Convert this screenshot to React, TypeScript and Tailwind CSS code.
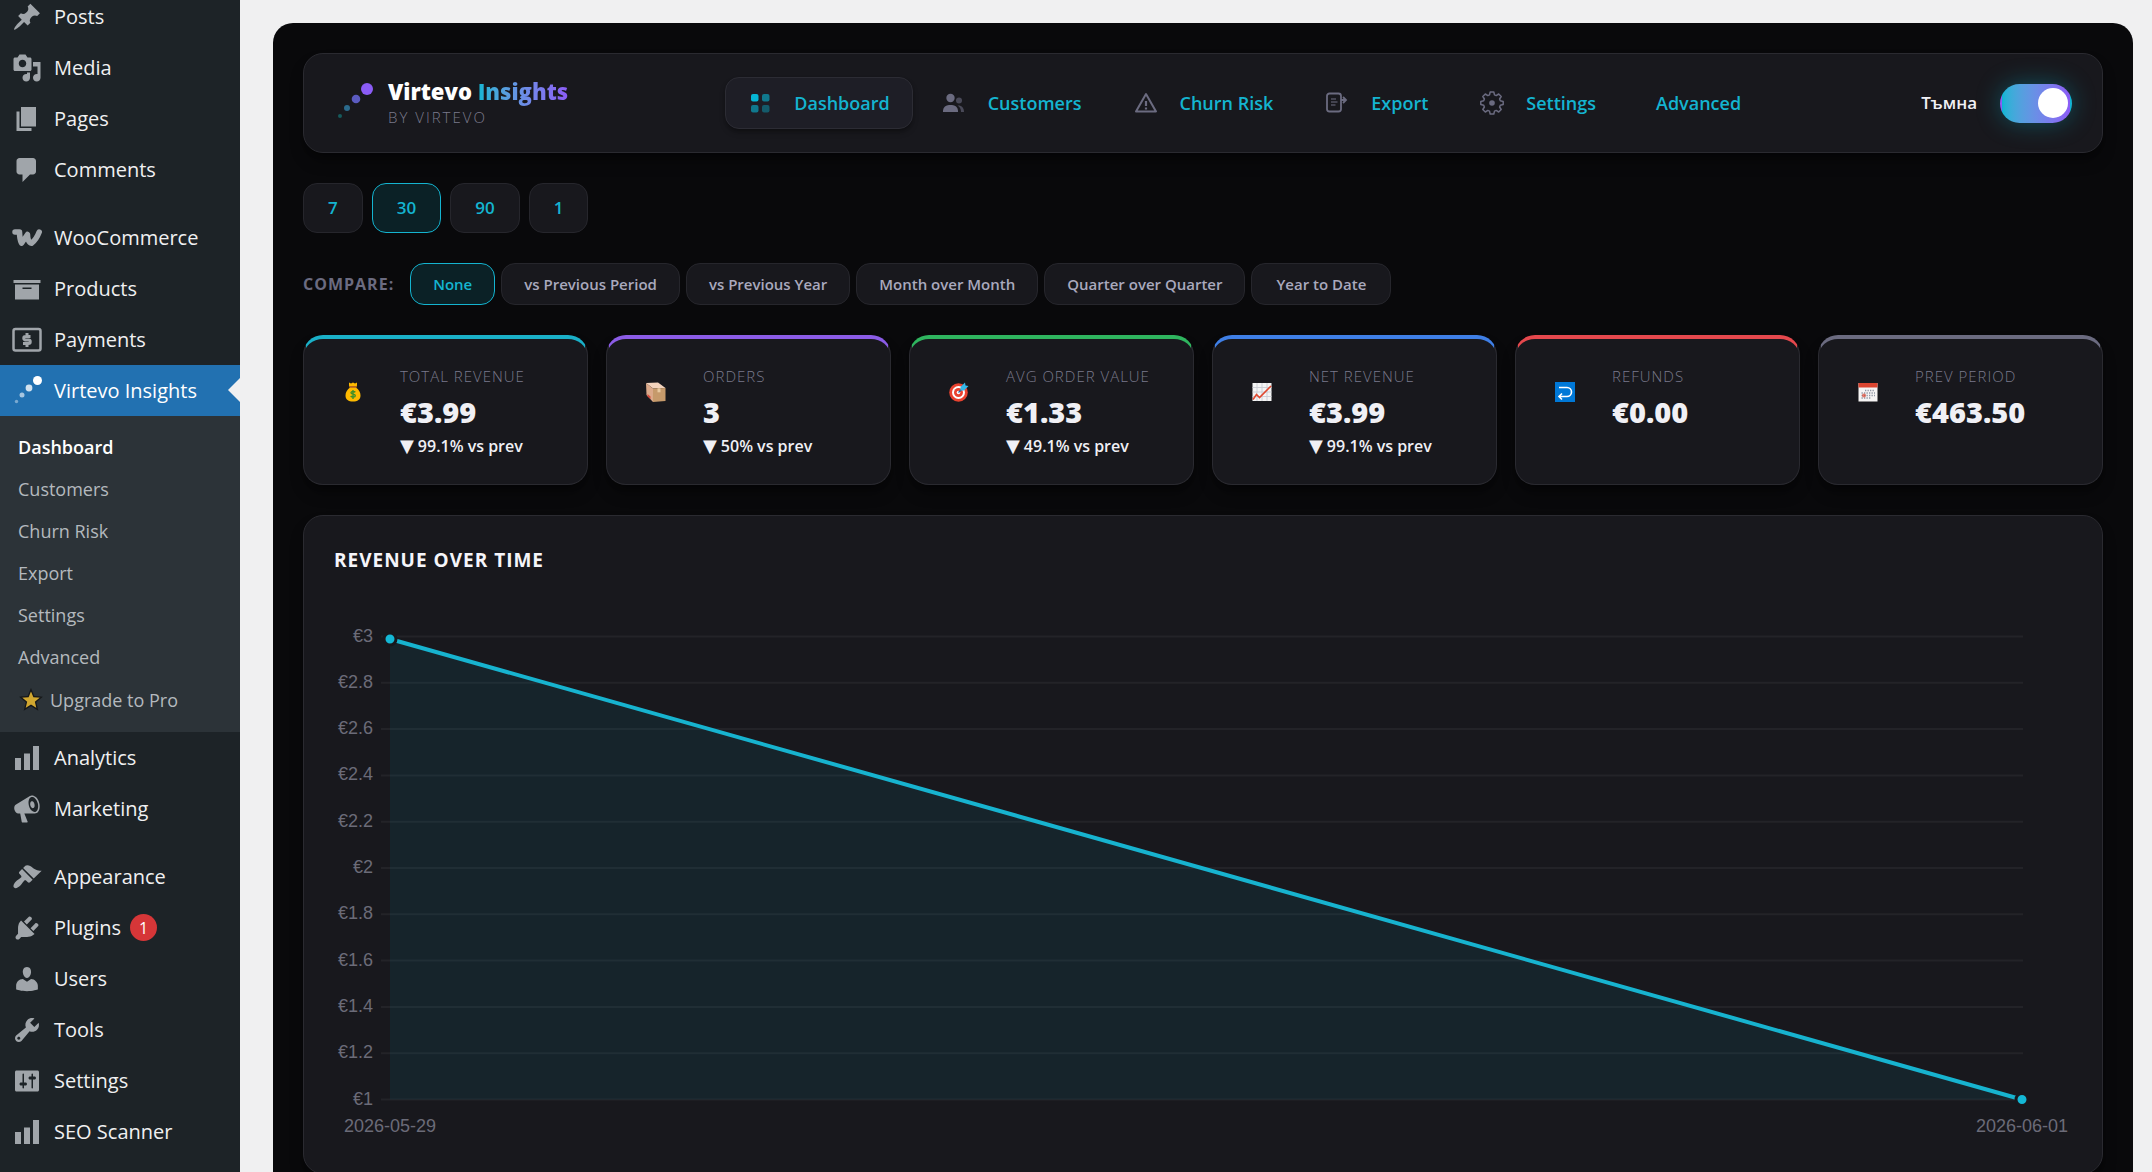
import React, { useState } from 'react';

interface IconProps {
  className?: string;
}

interface MenuItem {
  label: string;
  icon: React.ReactNode;
  badge?: number;
  active?: boolean;
}

// WordPress style 20x20 glyphs
const Dashicon = ({ d }: { d: string }) => (
  <svg viewBox="0 0 20 20" className="w-[30px] h-[30px] fill-current" aria-hidden="true">
    <path d={d} fillRule="evenodd" />
  </svg>
);

const ICONS = {
  post: 'M10.44 3.02l1.82-1.82 6.36 6.35-1.83 1.82c-1.05-.68-2.48-.57-3.41.36l-.75.75c-.92.93-1.04 2.35-.35 3.41l-1.83 1.82-2.41-2.41-2.8 2.79c-.42.42-3.38 2.71-3.8 2.29s1.86-3.39 2.28-3.81l2.79-2.79L4.1 9.36l1.83-1.82c1.05.69 2.48.57 3.4-.36l.75-.75c.93-.92 1.05-2.35.36-3.41z',
  media: 'M13 11V4c0-.55-.45-1-1-1h-1.67L9 1H5L3.67 3H2c-.55 0-1 .45-1 1v7c0 .55.45 1 1 1h10c.55 0 1-.45 1-1zM7 4.5c1.38 0 2.5 1.12 2.5 2.5S8.38 9.5 7 9.5 4.5 8.38 4.5 7 5.62 4.5 7 4.5zM14 6h5v10.5c0 1.38-1.12 2.5-2.5 2.5S14 17.88 14 16.5s1.12-2.5 2.5-2.5c.17 0 .34.02.5.05V9h-3V6zm-4 8.05V13h2v3.5c0 1.38-1.12 2.5-2.5 2.5S7 17.88 7 16.5 8.12 14 9.5 14c.17 0 .34.02.5.05z',
  page: 'M6 15V2h10v13H6zm-1 1h8v2H3V5h2v11z',
  comments: 'M5 2h9c1.1 0 2 .9 2 2v7c0 1.1-.9 2-2 2h-2l-5 5v-5H5c-1.1 0-2-.9-2-2V4c0-1.1.9-2 2-2z',
  archive: 'M19 4v2H1V4h18zM2 7h16v10H2V7zm11 3V9H7v1h6z',
  chart: 'M18 18V2h-4v16h4zm-6 0V7H8v11h4zm-10 0h4v-8H2v8z',
  megaphone: 'M18.15 5.94c.46 1.62.38 3.22-.02 4.48-.42 1.28-1.26 2.18-2.3 2.48-.16.06-.26.06-.4.06-.06.02-.12.02-.18.02-.06.02-.14.02-.22.02h-6.8l2.22 5.5c.02.14-.06.26-.14.34-.08.1-.24.16-.34.16H6.95c-.1 0-.26-.06-.34-.16-.08-.08-.16-.2-.14-.34l-1-5.5H4.25l-.02-.02c-.5.06-1.08-.18-1.54-.62s-.88-1.08-1.06-1.88c-.24-.8-.2-1.56-.02-2.2.18-.62.58-1.08 1.06-1.3l.02-.02 9-5.4c.1-.06.18-.1.24-.16.06-.04.14-.08.24-.12.16-.08.28-.12.5-.18 1.04-.3 2.24.1 3.22.98s1.84 2.24 2.26 3.86zm-2.58 5.98h-.02c.4-.1.74-.34 1.04-.7.58-.7.86-1.76.86-3.04 0-.64-.1-1.3-.28-1.98-.34-1.36-1.02-2.5-1.78-3.24s-1.68-1.1-2.46-.88c-.82.22-1.4.96-1.7 2-.32 1.04-.28 2.36.06 3.72.38 1.36 1 2.5 1.8 3.24.78.74 1.62 1.1 2.48.88zm-2.54-7.08c.22-.04.42-.02.62.04.38.16.76.48 1.02 1s.42 1.2.42 1.78c0 .3-.04.56-.12.8-.18.48-.44.84-.86.94-.34.1-.8-.06-1.14-.4s-.64-.86-.78-1.5c-.18-.62-.12-1.24.02-1.72s.48-.84.82-.94z',
  appearance: 'M14.48 11.06L7.41 3.99l1.5-1.5c.5-.56 2.3-.47 3.51.32 1.21.8 1.43 1.28 2.91 2.1 1.18.64 2.45 1.26 4.45.85zm-.71.71L6.7 4.7 4.93 6.47c-.39.39-.39 1.02 0 1.41l1.06 1.06c.39.39.39 1.03 0 1.42-.6.6-1.43 1.11-2.21 1.69-.35.26-.7.53-1.01.84C1.43 14.23.4 16.08 1.4 17.07c.99 1 2.84-.03 4.18-1.36.31-.31.58-.66.85-1.02.57-.78 1.08-1.61 1.69-2.21.39-.39 1.02-.39 1.41 0l1.06 1.06c.39.39 1.02.39 1.41 0z',
  plugins: 'M13.11 4.36L9.87 7.6 8 5.73l3.24-3.24c.35-.34 1.05-.2 1.56.32.52.51.66 1.21.31 1.55zm-8 1.77l.91-1.12 9.01 9.01-1.19.84c-.71.71-2.63 1.16-3.82 1.16H6.14L4.9 17.26c-.59.59-1.54.59-2.12 0-.59-.58-.59-1.53 0-2.12l1.24-1.24v-3.88c0-1.13.4-3.19 1.09-3.89zm7.26 3.97l3.24-3.24c.34-.35 1.04-.21 1.55.31.52.51.66 1.21.31 1.55l-3.24 3.25z',
  users: 'M10 9.25c-2.27 0-2.73-3.44-2.73-3.44C7 4.02 7.82 2 9.97 2c2.16 0 2.98 2.02 2.71 3.81 0 0-.41 3.44-2.68 3.44zm0 2.57L12.72 10c2.39 0 4.52 2.33 4.52 4.53v2.49s-3.65 1.13-7.24 1.13c-3.65 0-7.24-1.13-7.24-1.13v-2.49c0-2.25 1.94-4.48 4.47-4.48z',
  tools: 'M16.68 9.77c-1.34 1.34-3.3 1.67-4.95.99l-5.41 6.52c-.99.99-2.59.99-3.58 0s-.99-2.59 0-3.57l6.52-5.42c-.68-1.65-.35-3.61.99-4.95 1.28-1.28 3.12-1.62 4.72-1.06l-2.89 2.89 2.82 2.82 2.86-2.87c.53 1.58.18 3.39-1.08 4.65zM3.81 16.21c.4.39 1.04.39 1.43 0 .4-.4.4-1.04 0-1.43-.39-.4-1.03-.4-1.43 0-.39.39-.39 1.03 0 1.43z',
  settings: 'M18 16V4c0-.55-.45-1-1-1H3c-.55 0-1 .45-1 1v12c0 .55.45 1 1 1h14c.55 0 1-.45 1-1zM8 11h1c.55 0 1 .45 1 1s-.45 1-1 1H8v1.5c0 .28-.22.5-.5.5s-.5-.22-.5-.5V13H6c-.55 0-1-.45-1-1s.45-1 1-1h1V5.5c0-.28.22-.5.5-.5s.5.22.5.5V11zm5-2h-1c-.55 0-1-.45-1-1s.45-1 1-1h1V5.5c0-.28.22-.5.5-.5s.5.22.5.5V7h1c.55 0 1 .45 1 1s-.45 1-1 1h-1v5.5c0 .28-.22.5-.5.5s-.5-.22-.5-.5V9z',
};

const WooIcon = () => (
  <svg viewBox="0 0 30 30" className="w-[30px] h-[30px]" fill="none" stroke="currentColor" strokeWidth="5.5" strokeLinecap="round" strokeLinejoin="round" aria-hidden="true">
    <path d="M3 9h4.5C7.5 13 8 17 9.5 20.2L15.5 11.5C15.5 15 16.5 20 19.5 20.2C22.5 18 25.5 13.5 27.2 9" />
  </svg>
);

const PaymentsIcon = () => (
  <svg viewBox="0 0 30 30" className="w-[30px] h-[30px]" fill="none" stroke="currentColor" aria-hidden="true">
    <rect x="1.5" y="4" width="27" height="21.5" rx="2" strokeWidth="2.5" />
    <path d="M18.5 11.5H13.5A1.7 1.7 0 0 0 13.5 15H16.5A1.7 1.7 0 0 1 16.5 18.5H11M15 8V11M15 18.5V22" strokeWidth="3" />
  </svg>
);

const VirtevoIcon = () => (
  <svg viewBox="0 0 30 30" className="w-[30px] h-[30px] fill-white" aria-hidden="true">
    <circle cx="25.5" cy="4.5" r="4.5" />
    <circle cx="17" cy="12" r="3.4" opacity="0.8" />
    <circle cx="10" cy="19" r="2.5" opacity="0.6" />
    <circle cx="4.5" cy="25.5" r="1.7" opacity="0.4" />
  </svg>
);

const MENU: MenuItem[][] = [
  [
    { label: 'Posts', icon: <Dashicon d={ICONS.post} /> },
    { label: 'Media', icon: <Dashicon d={ICONS.media} /> },
    { label: 'Pages', icon: <Dashicon d={ICONS.page} /> },
    { label: 'Comments', icon: <Dashicon d={ICONS.comments} /> },
  ],
  [
    { label: 'WooCommerce', icon: <WooIcon /> },
    { label: 'Products', icon: <Dashicon d={ICONS.archive} /> },
    { label: 'Payments', icon: <PaymentsIcon /> },
    { label: 'Virtevo Insights', icon: <VirtevoIcon />, active: true },
    { label: 'Analytics', icon: <Dashicon d={ICONS.chart} /> },
    { label: 'Marketing', icon: <Dashicon d={ICONS.megaphone} /> },
  ],
  [
    { label: 'Appearance', icon: <Dashicon d={ICONS.appearance} /> },
    { label: 'Plugins', icon: <Dashicon d={ICONS.plugins} />, badge: 1 },
    { label: 'Users', icon: <Dashicon d={ICONS.users} /> },
    { label: 'Tools', icon: <Dashicon d={ICONS.tools} /> },
    { label: 'Settings', icon: <Dashicon d={ICONS.settings} /> },
    { label: 'SEO Scanner', icon: <Dashicon d={ICONS.chart} /> },
  ],
];

const SUBMENU = ['Dashboard', 'Customers', 'Churn Risk', 'Export', 'Settings', 'Advanced'];

const Submenu = () => (
  <ul className="bg-[#2c3338] py-[10px] text-lg">
    {SUBMENU.map((label, i) => (
      <li key={label}>
        <a
          href="#"
          className={`flex items-center h-[42px] pl-[18px] ${i === 0 ? 'font-semibold text-white' : 'text-[#b4b9be]'}`}
        >
          {label}
        </a>
      </li>
    ))}
    <li>
      <a href="#" className="flex items-center gap-[7px] h-11 pl-[19px] text-[#b4b9be]">
        <svg viewBox="0 0 22 22" className="w-6 h-6" aria-hidden="true">
          <path d="M11 1.5l2.6 6.3 6.8.6-5.2 4.4 1.6 6.7L11 15.9l-5.8 3.6 1.6-6.7L1.6 8.400l6.800-.6z" fill="#d1a730" stroke="#15171a" strokeWidth="1.2" />
        </svg>
        Upgrade to Pro
      </a>
    </li>
  </ul>
);

const Sidebar = () => (
  <nav className="w-60 shrink-0 bg-[#1d2327] overflow-hidden">
    <div className="-mt-[9px] flex flex-col gap-[17px]">
      {MENU.map((group, i) => (
        <ul key={i}>
          {group.map((item) => (
            <li key={item.label}>
              <a
                href="#"
                className={`relative flex items-center gap-3 h-[51px] pl-3 text-xl ${item.active ? 'bg-[#2271b1] text-white' : 'text-[#f0f0f1]'}`}
              >
                <span className={item.active ? 'text-white' : 'text-[#a0a5aa]'}>{item.icon}</span>
                <span>{item.label}</span>
                {item.badge && (
                  <span className="w-[27px] h-[27px] -ml-[3px] flex items-center justify-center rounded-full bg-[#d63638] text-base text-white">
                    {item.badge}
                  </span>
                )}
                {item.active && (
                  <span className="absolute right-0 top-[13px] border-y-12 border-y-transparent border-r-12 border-r-[#f0f0f1]" />
                )}
              </a>
              {item.active && <Submenu />}
            </li>
          ))}
        </ul>
      ))}
    </div>
  </nav>
);

const GridIcon = ({ className }: IconProps) => (
  <svg viewBox="0 0 24 24" className={className} fill="#06b6d4" aria-hidden="true">
    <rect x="3" y="3" width="7.5" height="7.5" rx="2" />
    <rect x="14" y="3" width="7.5" height="7.5" rx="2" opacity="0.6" />
    <rect x="3" y="14" width="7.5" height="7.5" rx="2" opacity="0.6" />
    <rect x="14" y="14" width="7.5" height="7.5" rx="2" opacity="0.4" />
  </svg>
);

const PeopleIcon = ({ className }: IconProps) => (
  <svg viewBox="0 0 24 24" className={className} fill="#6b6b80" aria-hidden="true">
    <circle cx="8.5" cy="7" r="4.2" />
    <path d="M1 21v-1.5A6 6 0 0 1 7 14h3a6 6 0 0 1 6 5.5V21z" />
    <circle cx="17" cy="9.5" r="3" opacity="0.6" />
    <path d="M15.5 14.5c4-.5 6.5 2 6.5 6.5h-3c0-3-1-5-3.5-6.5z" opacity="0.6" />
  </svg>
);

const WarningIcon = ({ className }: IconProps) => (
  <svg viewBox="0 0 24 24" className={className} fill="none" stroke="#6b6b80" strokeWidth="2" strokeLinejoin="round" aria-hidden="true">
    <path d="M12 3L22 20.5H2z" />
    <path d="M12 10v5M12 16.5v2" strokeWidth="2.2" />
  </svg>
);

const ExportIcon = ({ className }: IconProps) => (
  <svg viewBox="0 0 24 24" className={className} fill="none" stroke="#6b6b80" strokeWidth="1.8" aria-hidden="true">
    <rect x="2" y="2.5" width="14" height="18" rx="2.5" />
    <path d="M6 8h5M6 11h6.5M6 14h4.5" strokeWidth="1.3" opacity="0.7" />
    <path d="M16 9h5M18 6l3 3-3 3" />
  </svg>
);

const GearIcon = ({ className }: IconProps) => (
  <svg viewBox="0 0 24 24" className={className} fill="none" stroke="#6b6b80" strokeWidth="1.5" aria-hidden="true">
    <path
      d="M10.2 1h3.6l.7 2.9 1.7.7 2.5-1.6 2.5 2.5-1.6 2.5.7 1.7 2.9.7v3.2l-2.9.7-.7 1.7 1.6 2.5-2.5 2.5-2.5-1.6-1.7.7-.7 2.9h-3.6l-.7-2.9-1.7-.7L5.3 21l-2.5-2.5L4.4 16l-.7-1.7-2.9-.7v-3.2l2.9-.7L4.4 8 2.8 5.5 5.3 3l2.5 1.6 1.7-.7z"
      strokeLinejoin="round"
    />
    <circle cx="12" cy="12" r="2.8" fill="#6b6b80" stroke="none" />
  </svg>
);

const TABS = [
  { label: 'Dashboard', icon: GridIcon },
  { label: 'Customers', icon: PeopleIcon },
  { label: 'Churn Risk', icon: WarningIcon },
  { label: 'Export', icon: ExportIcon },
  { label: 'Settings', icon: GearIcon },
  { label: 'Advanced', icon: null },
];

const Header = () => {
  const [dark, setDark] = useState(true);

  return (
    <header className="flex items-center justify-between h-[100px] pl-8 pr-[30px] rounded-[20px] border border-[#2a2a30] bg-[#18181d] shadow-lg shadow-black/40">
      <div className="flex items-center gap-3">
        <svg viewBox="0 0 40 40" className="w-10 h-10" aria-hidden="true">
          <circle cx="31" cy="6" r="6" fill="#8b5cf6" />
          <circle cx="20" cy="16" r="4.3" fill="#5b5bc0" />
          <circle cx="11" cy="25" r="3" fill="#2b6a8c" />
          <circle cx="4" cy="33" r="2" fill="#165a5c" />
        </svg>
        <div className="flex flex-col">
          <h1 className="text-[22px] leading-7 font-extrabold text-white">
            Virtevo{' '}
            <span className="bg-gradient-to-r from-[#06b6d4] to-[#8b5cf6] bg-clip-text text-transparent">Insights</span>
          </h1>
          <p className="text-[15px] leading-6 font-light tracking-[2px] text-[#7a7a8c] uppercase">by Virtevo</p>
        </div>
      </div>

      <nav className="flex items-center gap-[6px]">
        {TABS.map(({ label, icon: Icon }, i) => (
          <a
            key={label}
            href="#"
            className={`flex items-center h-[52px] px-[22px] rounded-[14px] border text-lg font-semibold text-[#14b4d0] ${i === 0 ? 'border-[#2c2c34] bg-[#1e1e26] shadow-md shadow-black/30' : 'border-transparent'}`}
          >
            {Icon ? <Icon className="w-6 h-6 mr-[22px]" /> : <span className="w-2" />}
            {label}
          </a>
        ))}
      </nav>

      <label className="flex items-center gap-[23px] text-[17px] font-semibold text-[#f0f0f5]">
        Тъмна
        <span className="relative flex items-center w-[72px] h-[39px]">
          <input
            type="checkbox"
            role="switch"
            checked={dark}
            onChange={() => setDark(!dark)}
            className="appearance-none w-full h-full rounded-full border-2 border-transparent bg-gradient-to-r from-[#06b6d4] to-[#8b5cf6] shadow-[0_0_24px_rgba(6,182,212,0.35)]"
          />
          <span className={`absolute size-[30px] rounded-full bg-white pointer-events-none ${dark ? 'right-1' : 'left-1'}`} />
        </span>
      </label>
    </header>
  );
};

const PERIODS = ['7', '30', '90', '1'];
const COMPARISONS = [
  'None',
  'vs Previous Period',
  'vs Previous Year',
  'Month over Month',
  'Quarter over Quarter',
  'Year to Date',
];

const Filters = () => {
  const [period, setPeriod] = useState('30');
  const [compare, setCompare] = useState('None');

  return (
    <>
      <div className="flex gap-[9px] mt-[30px]">
        {PERIODS.map((p) => (
          <button
            key={p}
            onClick={() => setPeriod(p)}
            className={`h-[50px] px-6 rounded-[14px] border text-[17px] font-semibold text-[#14b4d0] ${p === period ? 'border-[#14b4d0] bg-[#0b2126]' : 'border-[#26262c] bg-[#18181d]'}`}
          >
            {p}
          </button>
        ))}
      </div>

      <div className="flex items-center gap-[6px] mt-[30px]">
        <span className="mr-[10px] text-base font-bold tracking-[1px] text-[#6b6b80]">COMPARE:</span>
        {COMPARISONS.map((c) => (
          <button
            key={c}
            onClick={() => setCompare(c)}
            className={`h-[42px] px-[22px] rounded-[14px] border text-[15px] font-semibold last:px-6 ${c === compare ? 'border-[#14b4d0] bg-[#0b2126] text-[#14b4d0]' : 'border-[#26262c] bg-[#18181d] text-[#a9a9bd]'}`}
          >
            {c}
          </button>
        ))}
      </div>
    </>
  );
};

const MoneyBag = () => (
  <svg viewBox="0 0 20 20" className="size-5" aria-hidden="true">
    <path d="M6 .5l2 1 2-1 2 1 2-1v3l-1 2c3 2 4.5 5 4.5 8 0 4-3 6-7.5 6s-7.5-2-7.5-6c0-3 1.500-6 4.500-8l-1-2z" fill="#fdb900" />
    <path d="M6.5 4h7v1.8h-7z" fill="#b5651d" />
    <path d="M12.3 10.3c-1-1.2-4.5-1-4.3.7.2 1.7 4.3.8 4.3 2.7 0 1.7-3.6 1.7-4.6.3M10 8v9" fill="none" stroke="#3f8f2a" strokeWidth="1.4" />
  </svg>
);

const PackageBox = () => (
  <svg viewBox="0 0 20 20" className="size-5" aria-hidden="true">
    <path d="M0 1l12-.5L19.5 6 7 6.5z" fill="#f3d3bd" />
    <path d="M0 1l7 5.5V20L.5 13z" fill="#dba98a" />
    <path d="M7 6.5L19.5 6v13L7 20z" fill="#c69a6b" />
    <path d="M11.5 6.3h3v4h-3z" fill="#e8c9a0" />
    <path d="M1.5 12l3 2.5v2.5l-3-2.5z" fill="#d6483b" />
  </svg>
);

const Target = () => (
  <svg viewBox="0 0 20 20" className="size-5" aria-hidden="true">
    <circle cx="9.5" cy="10.5" r="9.3" fill="#e8422f" />
    <circle cx="9.5" cy="10.5" r="6.5" fill="#fff" />
    <circle cx="9.5" cy="10.5" r="4.5" fill="#e8422f" />
    <circle cx="9.5" cy="10.5" r="1.8" fill="#fff" />
    <path d="M9.5 10.5l5-5" stroke="#1466a8" strokeWidth="1.2" />
    <path d="M11.5 8.5V5L16 .5l.5 3 3 .5L15 8.5z" fill="#35b8ea" />
  </svg>
);

const ChartUp = () => (
  <svg viewBox="0 0 20 20" className="size-5" aria-hidden="true">
    <path d="M.5 1h19v18H.5z" fill="#f4f4f4" />
    <path d="M5 1v18M10 1v18M15 1v18M.5 5.5h19M.5 10h19M.5 14.5h19" stroke="#c9ccd4" strokeWidth="0.9" />
    <path d="M1 17.5l3.5-5 3 3L19 4" fill="none" stroke="#e0482f" strokeWidth="1.6" />
  </svg>
);

const ReturnArrow = () => (
  <svg viewBox="0 0 20 20" className="size-5" aria-hidden="true">
    <path d="M0 0h20v20H0z" fill="#0078d7" />
    <path d="M4 5.5h8a4.5 4.5 0 0 1 0 9H4.5M7 11.5l-3 3 3 3" fill="none" stroke="#fff" strokeWidth="1.6" />
  </svg>
);

const Calendar = () => (
  <svg viewBox="0 0 20 20" className="size-5" aria-hidden="true">
    <path d="M.5 1h19v18.5H.5z" fill="#f6f4f4" />
    <path d="M.5 1h19v4.5H.5z" fill="#dc4530" />
    <path d="M7 8.5h10M3.5 11h13.5M3.5 13.5h13.5M3.5 16h9" stroke="#8f95a3" strokeWidth="1.3" strokeDasharray="1.3 1.2" />
    <circle cx="6" cy="13.5" r="2" fill="#dc4530" opacity="0.7" />
  </svg>
);

const STATS = [
  { label: 'Total Revenue', value: '€3.99', change: '99.1% vs prev', icon: MoneyBag, accent: 'border-t-[#1ab0c8]' },
  { label: 'Orders', value: '3', change: '50% vs prev', icon: PackageBox, accent: 'border-t-[#8b5ce6]' },
  { label: 'Avg Order Value', value: '€1.33', change: '49.1% vs prev', icon: Target, accent: 'border-t-[#2fb55f]' },
  { label: 'Net Revenue', value: '€3.99', change: '99.1% vs prev', icon: ChartUp, accent: 'border-t-[#3f7fe6]' },
  { label: 'Refunds', value: '€0.00', icon: ReturnArrow, accent: 'border-t-[#e5484d]' },
  { label: 'Prev Period', value: '€463.50', icon: Calendar, accent: 'border-t-[#6b6b80]' },
];

const StatCards = () => (
  <div className="grid grid-cols-6 gap-[18px] mt-[30px]">
    {STATS.map(({ label, value, change, icon: Icon, accent }) => (
      <div
        key={label}
        className={`flex gap-[20px] h-[150px] pt-[25px] pl-[22px] rounded-[20px] border border-[#2a2a30] border-t-4 bg-[#18181d] shadow-lg shadow-black/40 ${accent}`}
      >
        <div className="flex items-center justify-center w-[54px] h-[56px]">
          <Icon />
        </div>
        <div>
          <p className="text-[15px] leading-[24px] font-light tracking-[1px] text-[#7a7a8c] uppercase">{label}</p>
          <p className="text-[29px] leading-[48px] font-extrabold text-[#f0f0f5]">{value}</p>
          {change && (
            <p className="flex items-center gap-1 text-base leading-5 font-semibold text-[#f0f0f5]">
              <span className="font-['DejaVu_Sans',sans-serif] text-lg leading-5">▼</span>
              {change}
            </p>
          )}
        </div>
      </div>
    ))}
  </div>
);

const TICKS = ['€3', '€2.8', '€2.6', '€2.4', '€2.2', '€2', '€1.8', '€1.6', '€1.4', '€1.2', '€1'];

const RevenueChart = () => (
  <section className="mt-[30px] p-[30px] rounded-[20px] border border-[#2a2a30] bg-[#18181d] shadow-lg shadow-black/40">
    <h2 className="mb-[26px] text-[19px] leading-7 font-bold tracking-[1px] text-[#f5f5fa]">REVENUE OVER TIME</h2>
    <svg viewBox="0 0 1738 543" className="block w-full h-auto" role="img" aria-label="Revenue over time">
      {TICKS.map((tick, i) => {
        const y = 36.5 + i * 46.3;
        return (
          <g key={tick}>
            <line x1="47" x2="1689" y1={y} y2={y} stroke="#ffffff" strokeOpacity="0.05" strokeWidth="2" />
            <text x="39" y={y + 5} textAnchor="end" fill="#6b6b78" className="font-['Liberation_Sans',sans-serif] text-lg">
              {tick}
            </text>
          </g>
        );
      })}
      <path d="M56 39L1688 499.5H56z" fill="#06b6d4" fillOpacity="0.08" />
      <path d="M56 39L1688 499.5" stroke="#17b3cf" strokeWidth="4" />
      {[[56, 39], [1688, 499.5]].map(([x, y]) => (
        <circle key={x} cx={x} cy={y} r="6" fill="#14b8d6" stroke="#18181d" strokeWidth="3" />
      ))}
      <text x="56" y="532" textAnchor="middle" fill="#6b6b78" className="font-['Liberation_Sans',sans-serif] text-lg">2026-05-29</text>
      <text x="1688" y="532" textAnchor="middle" fill="#6b6b78" className="font-['Liberation_Sans',sans-serif] text-lg">2026-06-01</text>
    </svg>
  </section>
);

export default function App() {
  return (
    <div className="flex h-screen overflow-hidden bg-[#f0f0f1] font-['Open_Sans','Noto_Sans',sans-serif]">
      <Sidebar />
      <div className="flex-1 min-w-0 pt-[23px] pl-[33px] pr-[19px]">
        <main className="min-h-screen p-[30px] rounded-[20px] bg-[#09090b]">
          <Header />
          <Filters />
          <StatCards />
          <RevenueChart />
        </main>
      </div>
    </div>
  );
}
